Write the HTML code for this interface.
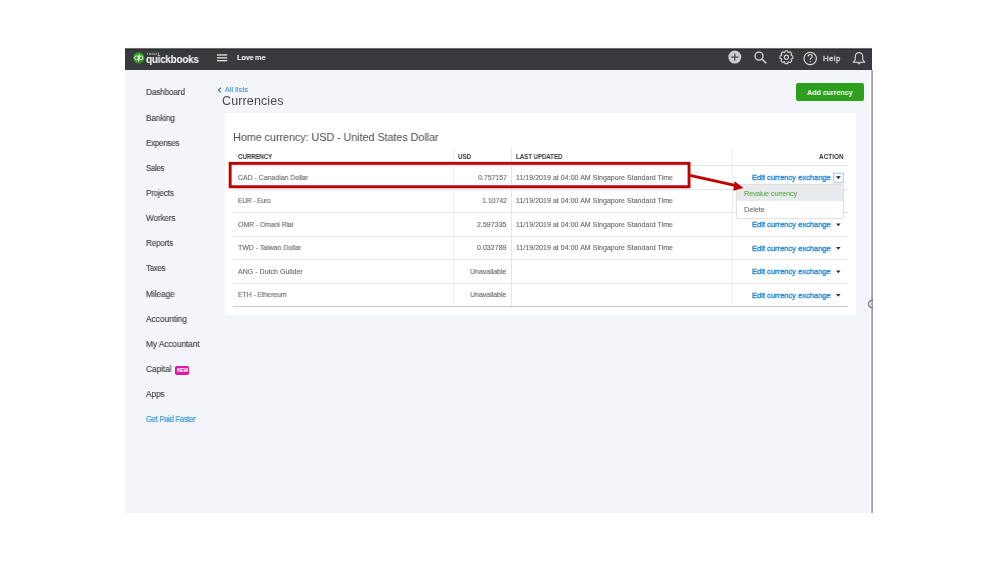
<!DOCTYPE html>
<html><head><meta charset="utf-8">
<style>
html,body{margin:0;padding:0;}
body{width:999px;height:562px;overflow:hidden;position:relative;background:#fff;font-family:"Liberation Sans",sans-serif;}
.a{position:absolute;}
.t{position:absolute;white-space:nowrap;line-height:1;will-change:transform;-webkit-text-stroke:0.12px currentColor;font-family:"Liberation Sans",sans-serif;}
.hl{position:absolute;height:1px;left:233px;width:615px;background:#e3e5e8;}
.vl{position:absolute;width:1px;top:148px;height:158px;}
</style></head><body>
<!-- app frame -->
<div class="a" style="left:125px;top:46px;width:747px;height:1px;background:#f7f7f7"></div>
<div class="a" style="left:125px;top:48px;width:746px;height:465px;background:#f4f5f8"></div>
<div class="a" style="left:869px;top:70px;width:2px;height:443px;background:#f9fafc"></div>
<div class="a" style="left:125px;top:48px;width:747px;height:22px;background:#393a3d"></div>
<div class="a" style="left:125px;top:48px;width:747px;height:1px;background:#6e6f72"></div>
<div class="a" style="left:125px;top:49px;width:747px;height:1px;background:#2c2d30"></div>

<svg class="a" style="left:860px;top:70px" width="20" height="443" viewBox="860 70 20 443">
  <rect x="871.2" y="70" width="1.8" height="443" fill="#a2a2a4"/>
  <path d="M873.2 300.3 A3.8 3.8 0 1 0 873.2 307.7" fill="none" stroke="#838385" stroke-width="1.5"/>
</svg>

<!-- top bar icons -->
<svg class="a" style="left:125px;top:48px" width="747" height="22" viewBox="125 48 747 22">
  <circle cx="138.8" cy="57.8" r="5.6" fill="#2ca01c"/>
  <g fill="none" stroke="#e9f5e6" stroke-width="1">
    <circle cx="136.6" cy="57.8" r="1.9"/>
    <circle cx="141" cy="57.8" r="1.9"/>
    <line x1="138.4" y1="55.8" x2="138.4" y2="61.5"/>
    <line x1="139.2" y1="54.2" x2="139.2" y2="59.8"/>
  </g>
  <!-- hamburger -->
  <g fill="#e6e6e6">
    <rect x="217" y="54.3" width="10.2" height="1.3"/>
    <rect x="217" y="57.2" width="10.2" height="1.3"/>
    <rect x="217" y="60" width="10.2" height="1.3"/>
  </g>
  <!-- plus circle -->
  <circle cx="734.8" cy="57.1" r="6.5" fill="#cbccd0"/>
  <g stroke="#393a3d" stroke-width="1.1">
    <line x1="734.8" y1="53.5" x2="734.8" y2="60.7"/>
    <line x1="731.2" y1="57.1" x2="738.4" y2="57.1"/>
  </g>
  <!-- search -->
  <g fill="none" stroke="#dadadc" stroke-width="1.3">
    <circle cx="759" cy="56.1" r="4"/>
    <line x1="761.9" y1="59" x2="766.2" y2="63.2" stroke-width="1.6"/>
  </g>
  <!-- gear -->
  <g transform="translate(786.4 57.2) scale(1.04)" fill="none" stroke="#dadadc" stroke-width="1" stroke-linejoin="round">
    <path d="M4.65,-1.54 L6.17,-1.25 L6.17,1.25 L4.65,1.54 L4.38,2.20 L5.25,3.48 L3.48,5.25 L2.20,4.38 L1.54,4.65 L1.25,6.17 L-1.25,6.17 L-1.54,4.65 L-2.20,4.38 L-3.48,5.25 L-5.25,3.48 L-4.38,2.20 L-4.65,1.54 L-6.17,1.25 L-6.17,-1.25 L-4.65,-1.54 L-4.38,-2.20 L-5.25,-3.48 L-3.48,-5.25 L-2.20,-4.38 L-1.54,-4.65 L-1.25,-6.17 L1.25,-6.17 L1.54,-4.65 L2.20,-4.38 L3.48,-5.25 L5.25,-3.48 L4.38,-2.20 Z"/>
    <circle cx="0" cy="0" r="2"/>
  </g>
  <!-- help circle -->
  <circle cx="810.2" cy="58.4" r="6.2" fill="none" stroke="#e0e0e2" stroke-width="1.1"/>
  <path d="M808.2 56.6 Q808.2 54.5 810.2 54.5 Q812.2 54.5 812.2 56.4 Q812.2 57.6 810.9 58.2 Q810.2 58.6 810.2 59.7" fill="none" stroke="#e0e0e2" stroke-width="1.1"/>
  <circle cx="810.2" cy="61.6" r="0.7" fill="#e0e0e2"/>
  <!-- bell -->
  <path d="M859 52.5 Q862.8 52.8 862.8 57.5 L862.8 60 L864.8 62.2 L853.2 62.2 L855.2 60 L855.2 57.5 Q855.2 52.8 859 52.5 Z" fill="none" stroke="#e0e0e2" stroke-width="1.1" stroke-linejoin="round"/>
  <path d="M857.5 63.2 Q859 64.8 860.5 63.2" fill="none" stroke="#e0e0e2" stroke-width="1"/>
</svg>

<!-- back chevron -->
<svg class="a" style="left:216px;top:86px" width="8" height="8" viewBox="216 86 8 8">
  <path d="M221 87.6 L218.4 90 L221 92.4" fill="none" stroke="#4b5cc0" stroke-width="1.1"/>
</svg>

<!-- add currency button -->
<div class="a" style="left:796px;top:83px;width:68px;height:18px;background:#2ca01c;border-radius:2px"></div>

<!-- NEW badge -->
<div class="a" style="left:175px;top:365.6px;width:13.8px;height:9.1px;background:#e3179b;border-radius:1.8px"></div>
<div class="t" style="left:176.6px;top:367.9px;font-size:5.4px;font-weight:700;color:#fff;letter-spacing:-0.15px;transform:scaleX(0.9);transform-origin:left top">NEW</div>

<!-- card -->
<div class="a" style="left:225px;top:113px;width:631px;height:201.5px;background:#fff"></div>
<div class="hl" style="top:165px"></div>
<div class="hl" style="top:188.8px"></div>
<div class="hl" style="top:212.3px"></div>
<div class="hl" style="top:235.8px"></div>
<div class="hl" style="top:259.3px"></div>
<div class="hl" style="top:282.8px"></div>
<div class="hl" style="top:306px;background:#c5c8cd"></div>
<div class="vl" style="left:453px;background:#eceef1"></div>
<div class="vl" style="left:511px;background:#e3e6ea"></div>
<div class="vl" style="left:732px;background:#eceef1"></div>

<!-- carets -->
<svg class="a" style="left:0;top:0" width="999" height="562" viewBox="0 0 999 562">
  <rect x="833.7" y="173.3" width="9.6" height="9.4" fill="#fff" stroke="#a3c3ee" stroke-width="1"/>
  <path d="M836 176.3 L840.8 176.3 L838.4 179.1 Z" fill="#1a1b1e"/>
  <path d="M836 223.4 L840.6 223.4 L838.3 226.2 Z" fill="#2b2c30"/>
  <path d="M836 246.9 L840.6 246.9 L838.3 249.7 Z" fill="#2b2c30"/>
  <path d="M836 270.4 L840.6 270.4 L838.3 273.2 Z" fill="#2b2c30"/>
  <path d="M836 293.9 L840.6 293.9 L838.3 296.7 Z" fill="#2b2c30"/>
</svg>

<!-- dropdown menu -->
<div class="a" style="left:736.8px;top:184.8px;width:105.8px;height:33px;background:#fff;box-shadow:0 0 1.5px rgba(0,0,0,0.45)"></div>
<div class="a" style="left:736.8px;top:184.8px;width:105.8px;height:16px;background:#e9eaed"></div>

<div class=t style="left:145.70px;top:54.77px;font-size:10.2px;font-weight:700;color:#ffffff;letter-spacing:-0.207px;transform:scaleX(0.9681);transform-origin:left top;-webkit-text-stroke:0">quickbooks</div>
<div class=t style="left:146.80px;top:52.85px;font-size:3.6px;font-weight:700;color:#cfcfcf;letter-spacing:0.644px;-webkit-text-stroke:0">intuit</div>
<div class=t style="left:237.00px;top:54.37px;font-size:7.6px;font-weight:700;color:#ffffff;letter-spacing:-0.200px;transform:scaleX(0.9625);transform-origin:left top;-webkit-text-stroke:0">Love me</div>
<div class=t style="left:822.60px;top:54.51px;font-size:7.9px;font-weight:400;color:#d2d2d4;letter-spacing:0.355px;-webkit-text-stroke:0.35px currentColor">Help</div>
<div class=t style="left:225.00px;top:85.77px;font-size:7px;font-weight:400;color:#3596dc;letter-spacing:0.152px">All lists</div>
<div class=t style="left:222.40px;top:94.72px;font-size:12.5px;font-weight:400;color:#4a4b4f;letter-spacing:0.129px;-webkit-text-stroke:0">Currencies</div>
<div class=t style="left:807.30px;top:88.65px;font-size:7.5px;font-weight:700;color:#ffffff;letter-spacing:-0.124px;transform:scaleX(0.9725);transform-origin:left top;-webkit-text-stroke:0">Add currency</div>
<div class=t style="left:146.00px;top:88.10px;font-size:8.5px;font-weight:400;color:#3f4044;letter-spacing:-0.167px;transform:scaleX(0.9688);transform-origin:left top">Dashboard</div>
<div class=t style="left:146.00px;top:113.60px;font-size:8.5px;font-weight:400;color:#3f4044;letter-spacing:-0.147px;transform:scaleX(0.9720);transform-origin:left top">Banking</div>
<div class=t style="left:146.00px;top:138.80px;font-size:8.5px;font-weight:400;color:#3f4044;letter-spacing:-0.297px;transform:scaleX(0.9472);transform-origin:left top">Expenses</div>
<div class=t style="left:146.00px;top:163.80px;font-size:8.5px;font-weight:400;color:#3f4044;letter-spacing:-0.384px;transform:scaleX(0.9326);transform-origin:left top">Sales</div>
<div class=t style="left:146.00px;top:189.20px;font-size:8.5px;font-weight:400;color:#3f4044;letter-spacing:-0.219px;transform:scaleX(0.9525);transform-origin:left top">Projects</div>
<div class=t style="left:146.00px;top:214.20px;font-size:8.5px;font-weight:400;color:#3f4044;letter-spacing:-0.172px;transform:scaleX(0.9683);transform-origin:left top">Workers</div>
<div class=t style="left:146.00px;top:239.40px;font-size:8.5px;font-weight:400;color:#3f4044;letter-spacing:-0.223px;transform:scaleX(0.9569);transform-origin:left top">Reports</div>
<div class=t style="left:146.00px;top:264.40px;font-size:8.5px;font-weight:400;color:#3f4044;letter-spacing:-0.362px;transform:scaleX(0.9388);transform-origin:left top">Taxes</div>
<div class=t style="left:146.00px;top:289.70px;font-size:8.5px;font-weight:400;color:#3f4044;letter-spacing:-0.083px;transform:scaleX(0.9835);transform-origin:left top">Mileage</div>
<div class=t style="left:146.00px;top:314.90px;font-size:8.5px;font-weight:400;color:#3f4044;letter-spacing:-0.060px;transform:scaleX(0.9874);transform-origin:left top">Accounting</div>
<div class=t style="left:146.00px;top:340.20px;font-size:8.5px;font-weight:400;color:#3f4044;letter-spacing:-0.088px;transform:scaleX(0.9815);transform-origin:left top">My Accountant</div>
<div class=t style="left:146.00px;top:364.80px;font-size:8.5px;font-weight:400;color:#3f4044;letter-spacing:-0.091px;transform:scaleX(0.9798);transform-origin:left top">Capital</div>
<div class=t style="left:146.00px;top:390.00px;font-size:8.5px;font-weight:400;color:#3f4044;letter-spacing:-0.132px;transform:scaleX(0.9800);transform-origin:left top">Apps</div>
<div class=t style="left:146.00px;top:415.49px;font-size:8.4px;font-weight:400;color:#2e8fd8;letter-spacing:-0.346px;transform:scaleX(0.9237);transform-origin:left top">Get Paid Faster</div>
<div class=t style="left:233.10px;top:132.02px;font-size:11.2px;font-weight:400;color:#4d4e53;letter-spacing:-0.123px;transform:scaleX(0.9776);transform-origin:left top;-webkit-text-stroke:0">Home currency: USD - United States Dollar</div>
<div class=t style="left:237.80px;top:154.18px;font-size:6.4px;font-weight:700;color:#393a3d;letter-spacing:-0.141px;transform:scaleX(0.9735);transform-origin:left top;-webkit-text-stroke:0">CURRENCY</div>
<div class=t style="left:458.30px;top:154.18px;font-size:6.4px;font-weight:700;color:#393a3d;letter-spacing:-0.233px;transform:scaleX(0.9667);transform-origin:left top;-webkit-text-stroke:0">USD</div>
<div class=t style="left:516.20px;top:154.18px;font-size:6.4px;font-weight:700;color:#393a3d;letter-spacing:-0.111px;transform:scaleX(0.9757);transform-origin:left top;-webkit-text-stroke:0">LAST UPDATED</div>
<div class=t style="right:155.48px;top:154.18px;font-size:6.4px;font-weight:700;color:#393a3d;letter-spacing:0.020px;-webkit-text-stroke:0">ACTION</div>
<div class=t style="left:237.80px;top:173.67px;font-size:7px;font-weight:400;color:#68696e;letter-spacing:-0.025px;transform:scaleX(0.9930);transform-origin:left top">CAD - Canadian Dollar</div>
<div class=t style="right:492.43px;top:173.67px;font-size:7px;font-weight:400;color:#68696e;letter-spacing:-0.029px;transform:scaleX(0.9931);transform-origin:right top">0.757157</div>
<div class=t style="left:516.30px;top:173.67px;font-size:7px;font-weight:400;color:#68696e;letter-spacing:0.041px">11/19/2019 at 04:00 AM Singapore Standard Time</div>
<div class=t style="left:751.60px;top:174.27px;font-size:7.6px;font-weight:400;color:#2585cf;letter-spacing:-0.016px;transform:scaleX(0.9958);transform-origin:left top;-webkit-text-stroke:0.32px currentColor">Edit currency exchange</div>
<div class=t style="left:237.80px;top:197.17px;font-size:7px;font-weight:400;color:#68696e;letter-spacing:-0.186px;transform:scaleX(0.9553);transform-origin:left top">EUR - Euro</div>
<div class=t style="right:492.45px;top:197.17px;font-size:7px;font-weight:400;color:#68696e;letter-spacing:-0.052px;transform:scaleX(0.9879);transform-origin:right top">1.10742</div>
<div class=t style="left:516.30px;top:197.17px;font-size:7px;font-weight:400;color:#68696e;letter-spacing:0.041px">11/19/2019 at 04:00 AM Singapore Standard Time</div>
<div class=t style="left:237.80px;top:220.67px;font-size:7px;font-weight:400;color:#68696e;letter-spacing:-0.061px;transform:scaleX(0.9844);transform-origin:left top">OMR - Omani Rial</div>
<div class=t style="right:492.36px;top:220.67px;font-size:7px;font-weight:400;color:#68696e;letter-spacing:0.042px">2.597335</div>
<div class=t style="left:516.30px;top:220.67px;font-size:7px;font-weight:400;color:#68696e;letter-spacing:0.041px">11/19/2019 at 04:00 AM Singapore Standard Time</div>
<div class=t style="left:751.60px;top:221.27px;font-size:7.6px;font-weight:400;color:#2585cf;letter-spacing:-0.016px;transform:scaleX(0.9958);transform-origin:left top;-webkit-text-stroke:0.32px currentColor">Edit currency exchange</div>
<div class=t style="left:237.80px;top:244.17px;font-size:7px;font-weight:400;color:#68696e;letter-spacing:-0.024px;transform:scaleX(0.9933);transform-origin:left top">TWD - Taiwan Dollar</div>
<div class=t style="right:492.36px;top:244.17px;font-size:7px;font-weight:400;color:#68696e;letter-spacing:0.042px">0.032789</div>
<div class=t style="left:516.30px;top:244.17px;font-size:7px;font-weight:400;color:#68696e;letter-spacing:0.041px">11/19/2019 at 04:00 AM Singapore Standard Time</div>
<div class=t style="left:751.60px;top:244.77px;font-size:7.6px;font-weight:400;color:#2585cf;letter-spacing:-0.016px;transform:scaleX(0.9958);transform-origin:left top;-webkit-text-stroke:0.32px currentColor">Edit currency exchange</div>
<div class=t style="left:237.80px;top:267.67px;font-size:7px;font-weight:400;color:#68696e;letter-spacing:0.028px">ANG - Dutch Guilder</div>
<div class=t style="right:492.42px;top:267.67px;font-size:7px;font-weight:400;color:#68696e;letter-spacing:-0.020px;transform:scaleX(0.9946);transform-origin:right top">Unavailable</div>
<div class=t style="left:751.60px;top:268.27px;font-size:7.6px;font-weight:400;color:#2585cf;letter-spacing:-0.016px;transform:scaleX(0.9958);transform-origin:left top;-webkit-text-stroke:0.32px currentColor">Edit currency exchange</div>
<div class=t style="left:237.80px;top:291.17px;font-size:7px;font-weight:400;color:#68696e;letter-spacing:-0.074px;transform:scaleX(0.9814);transform-origin:left top">ETH - Ethereum</div>
<div class=t style="right:492.42px;top:291.17px;font-size:7px;font-weight:400;color:#68696e;letter-spacing:-0.020px;transform:scaleX(0.9946);transform-origin:right top">Unavailable</div>
<div class=t style="left:751.60px;top:291.77px;font-size:7.6px;font-weight:400;color:#2585cf;letter-spacing:-0.016px;transform:scaleX(0.9958);transform-origin:left top;-webkit-text-stroke:0.32px currentColor">Edit currency exchange</div>
<div class=t style="left:744.00px;top:189.54px;font-size:7.4px;font-weight:400;color:#46a038;letter-spacing:-0.157px;transform:scaleX(0.9607);transform-origin:left top;-webkit-text-stroke:0">Revalue currency</div>
<div class=t style="left:744.00px;top:205.54px;font-size:7.4px;font-weight:400;color:#5a5b60;letter-spacing:-0.089px;transform:scaleX(0.9795);transform-origin:left top;-webkit-text-stroke:0">Delete</div>

<!-- red annotation -->
<svg class="a" style="left:0;top:0" width="999" height="562" viewBox="0 0 999 562">
  <rect x="230.15" y="163.35" width="458.9" height="23.4" fill="none" stroke="#c00000" stroke-width="2.9"/>
  <line x1="690" y1="175.3" x2="736" y2="185.6" stroke="#c00000" stroke-width="2.9"/>
  <path d="M743.5 188 L734.6 181.3 L733.2 190.8 Z" fill="#c00000"/>
</svg>
</body></html>
